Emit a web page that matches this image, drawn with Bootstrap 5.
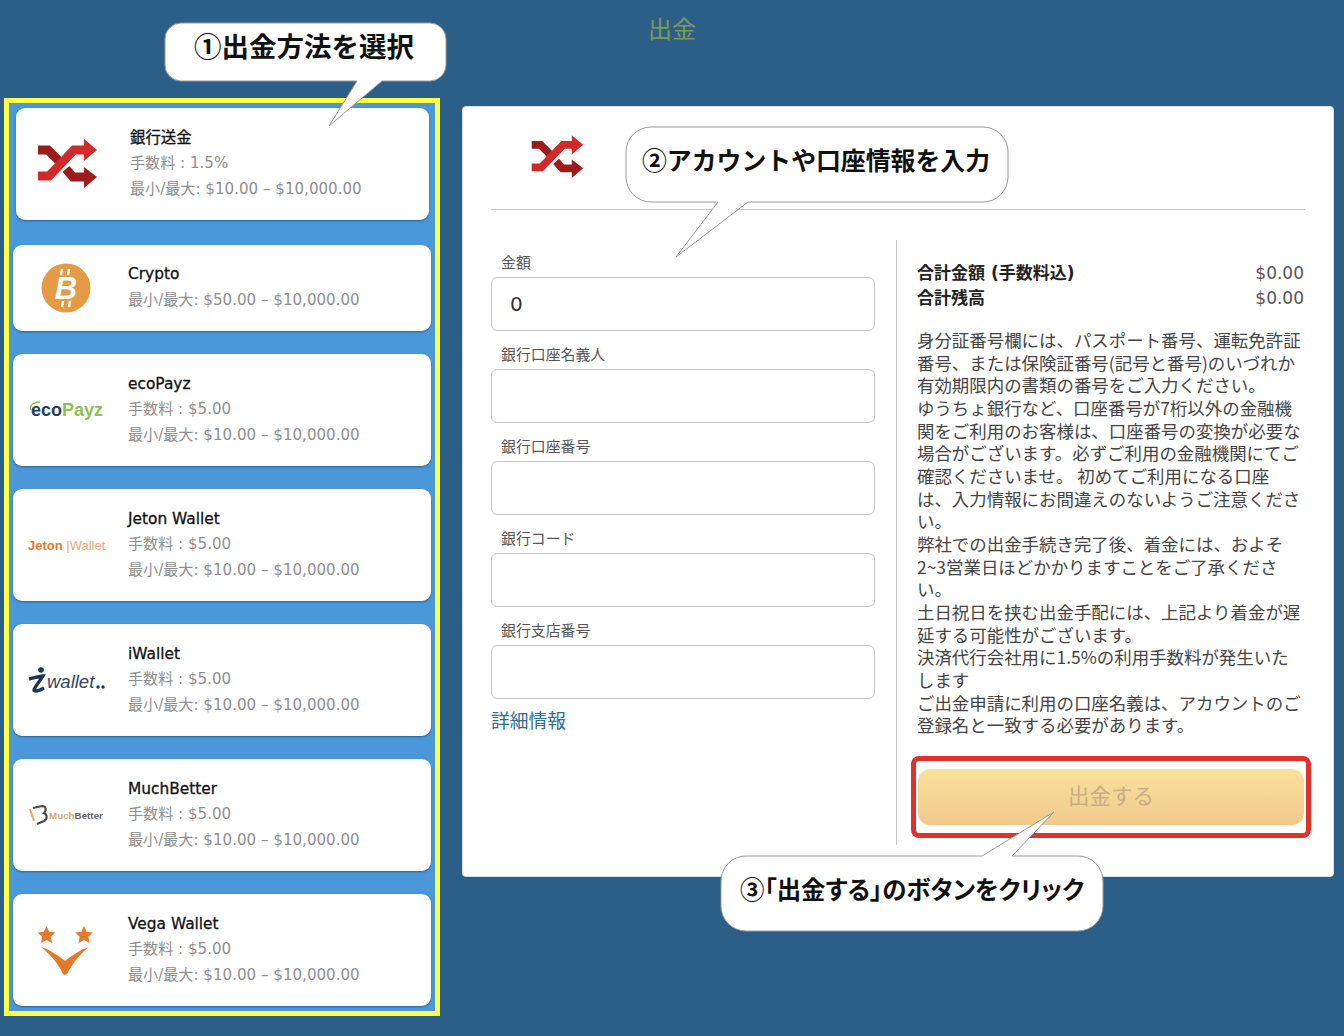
<!DOCTYPE html>
<html lang="ja">
  <head>
    <meta charset="UTF-8" />
    <meta name="viewport" content="width=device-width, initial-scale=1.0" />
    <title>出金</title>
    <link
      rel="stylesheet"
      href="https://cdn.jsdelivr.net/npm/bootstrap@5.3.0/dist/css/bootstrap.min.css"
    />
    <style>
      body {
        background: #2c5f88;
        font-family: "DejaVu Sans", "Noto Sans CJK JP", sans-serif;
        height: 1036px;
        overflow: hidden;
      }
      #page {
        width: 1344px;
        height: 1036px;
      }
      .page-title {
        height: 58px;
        line-height: 56px;
        font-size: 24px;
        font-weight: 400;
        color: #7c9a55;
        font-family: "Noto Sans CJK JP", sans-serif;
        margin: 0;
      }
      /* left column */
      .method-panel {
        width: 436px;
        height: 918px;
        margin: 40px 0 0 4px;
        border: 5px solid #fdfd4a;
        background: #4a98d9;
        padding: 0 4px;
      }
      .method {
        border: 0;
        border-radius: 9px;
        margin-bottom: 23px;
        height: 112px;
        box-shadow: 0 1px 2px rgba(20, 60, 100, 0.6);
      }
      .method.first {
        margin: 5px 2px 25px 3px;
      }
      .method.first .method-logo {
        width: 114px;
      }
      .method.first .method-logo svg {
        margin-left: 20px;
      }
      .method.short {
        height: 86px;
      }
      .method-logo {
        width: 115px;
        flex: none;
      }
      .method-name {
        font-size: 15.4px;
        line-height: 25.6px;
        color: #111;
        -webkit-text-stroke: 0.3px #111;
      }
      .method-info {
        font-size: 15.1px;
        line-height: 25.6px;
        color: #8e8e8e;
      }
      /* right panel */
      .detail-panel {
        width: 872px;
        height: 771px;
        margin: 48px 0 0 22px;
        border: 1px solid #d8dde2;
        border-radius: 4px;
        padding: 0 28px;
      }
      .detail-head {
        height: 103px;
        border-bottom: 1px solid #c9c9c9;
        padding: 27px 0 0 39px;
      }
      .form-col {
        width: 384px;
        padding-top: 42px;
      }
      .form-col .form-label {
        font-size: 14.9px;
        line-height: 22px;
        color: #555;
        margin: 0 0 3px 10px;
        display: block;
      }
      .form-col .form-control {
        height: 54px;
        border: 1px solid #c8c8c8;
        border-radius: 6px;
        font-size: 20px;
        color: #333;
        padding-left: 18px;
        margin-bottom: 13px;
      }
      .more-link {
        font-size: 18.75px;
        color: #2d6d92;
        text-decoration: none;
        font-family: "Noto Sans CJK JP", sans-serif;
        line-height: 24px;
        display: block;
        margin-top: -4px;
      }
      .summary-col {
        width: 408px;
        margin: 30px 0 0 21px;
        height: 605px;
        border-left: 1px solid #c4c4c4;
        padding: 21px 0 0 20px;
      }
      .total-row {
        font-size: 17px;
        line-height: 25px;
        color: #222;
      }
      .total-row .value {
        color: #555;
      }
      .notice {
        font-family: "Noto Sans CJK JP", sans-serif;
        font-size: 17.45px;
        line-height: 22.65px;
        color: #444;
        white-space: nowrap;
        margin: 18px 0 0;
      }
      .withdraw-box {
        width: 400px;
        height: 82px;
        margin: 19px 0 0 -6px;
        border: 5px solid #e0322a;
        border-radius: 8px;
        padding: 8px 2px 0;
      }
      .btn-withdraw {
        width: 100%;
        height: 56px;
        border: 0;
        border-radius: 12px;
        background: linear-gradient(#f9e29c, #f1c98d);
        color: #c8ae84;
        font-size: 21.5px;
        padding: 0 0 4px;
        font-family: "Noto Sans CJK JP", sans-serif;
      }
      /* callouts lie over everything */
      #callouts {
        position: absolute;
        left: 0;
        top: 0;
        pointer-events: none;
      }
      #callouts path {
        fill: #fff;
        stroke: #9a9a9a;
        stroke-width: 1;
      }
      #callouts text {
        font-family: "Noto Sans CJK JP", sans-serif;
        font-weight: 700;
        fill: #111;
      }
      #callouts .tight {
        font-feature-settings: "palt";
      }
      .logo-text {
        font-family: "Liberation Sans", sans-serif;
      }
    </style>
  </head>
  <body>
    <div id="page" class="position-relative">
      <h1 class="page-title text-center">出金</h1>
      <div class="d-flex align-items-start">
        <!-- Withdrawal methods -->
        <div class="method-panel">
          <div class="card method first flex-row align-items-center">
            <div class="method-logo">
              <svg width="62" height="52" viewBox="0 0 62 52" class="d-block">
                <use href="#shuffle" />
              </svg>
            </div>
            <div>
              <div class="method-name">銀行送金</div>
              <div class="method-info">手数料 : 1.5%</div>
              <div class="method-info">最小/最大: $10.00 – $10,000.00</div>
            </div>
          </div>

          <div class="card method short flex-row align-items-center">
            <div class="method-logo">
              <svg width="115" height="52" viewBox="0 0 115 52" class="d-block">
                <circle cx="53" cy="26" r="24.5" fill="#e59a45" />
                <text x="53" y="37" text-anchor="middle" font-size="31" font-weight="700" font-style="italic" fill="#fff" class="logo-text">B</text>
                <path d="M49 7l-1 6M56 7l-1 6M50 39l-1 6M57 39l-1 6" stroke="#fff" stroke-width="2.4" />
              </svg>
            </div>
            <div>
              <div class="method-name">Crypto</div>
              <div class="method-info">最小/最大: $50.00 – $10,000.00</div>
            </div>
          </div>

          <div class="card method flex-row align-items-center">
            <div class="method-logo">
              <svg width="115" height="40" viewBox="0 0 115 40" class="d-block">
                <path d="M18 20c-2-4 2-8 9-8" fill="none" stroke="#8bbd4f" stroke-width="1.3" />
                <text x="18" y="26" font-size="18" font-weight="700" class="logo-text"><tspan fill="#1d3f5c">eco</tspan><tspan fill="#8bc154">Payz</tspan></text>
              </svg>
            </div>
            <div>
              <div class="method-name">ecoPayz</div>
              <div class="method-info">手数料 : $5.00</div>
              <div class="method-info">最小/最大: $10.00 – $10,000.00</div>
            </div>
          </div>

          <div class="card method flex-row align-items-center">
            <div class="method-logo">
              <svg width="115" height="40" viewBox="0 0 115 40" class="d-block">
                <text x="15" y="25" font-size="13" class="logo-text"><tspan fill="#e17a32" font-weight="700">Jeton</tspan><tspan fill="#eba678"> |Wallet</tspan></text>
              </svg>
            </div>
            <div>
              <div class="method-name">Jeton Wallet</div>
              <div class="method-info">手数料 : $5.00</div>
              <div class="method-info">最小/最大: $10.00 – $10,000.00</div>
            </div>
          </div>

          <div class="card method flex-row align-items-center">
            <div class="method-logo">
              <svg width="115" height="40" viewBox="0 0 115 40" class="d-block">
                <circle cx="28" cy="10" r="2.8" fill="#1c3553" />
                <path d="M16 19c5-1 10-3 14-3-3 5-8 10-9 14 0 2 5 1 10-2" fill="none" stroke="#1c3553" stroke-width="3.4" />
                <text x="34" y="28" font-size="18.5" font-style="italic" fill="#30465e" class="logo-text">wallet</text>
                <circle cx="85" cy="27" r="1.7" fill="#1c3553" />
                <circle cx="90" cy="27" r="1.7" fill="#1c3553" />
              </svg>
            </div>
            <div>
              <div class="method-name">iWallet</div>
              <div class="method-info">手数料 : $5.00</div>
              <div class="method-info">最小/最大: $10.00 – $10,000.00</div>
            </div>
          </div>

          <div class="card method flex-row align-items-center">
            <div class="method-logo">
              <svg width="115" height="40" viewBox="0 0 115 40" class="d-block">
                <path d="M20 13l9-2c4 0 5 4 2 7 3 1 4 6 0 8l-7 3" fill="none" stroke="#4a4a4a" stroke-width="2.2" />
                <path d="M17 14l4 12" fill="none" stroke="#e5a85c" stroke-width="2" />
                <text x="36" y="24" font-size="9.8" font-weight="700" class="logo-text"><tspan fill="#e5a85c">Much</tspan><tspan fill="#666">Better</tspan></text>
              </svg>
            </div>
            <div>
              <div class="method-name">MuchBetter</div>
              <div class="method-info">手数料 : $5.00</div>
              <div class="method-info">最小/最大: $10.00 – $10,000.00</div>
            </div>
          </div>

          <div class="card method flex-row align-items-center mb-0">
            <div class="method-logo">
              <svg width="115" height="60" viewBox="0 0 115 60" class="d-block">
                <path id="star" d="M33.500 6l2.700 5.700 6.200.8-4.600 4.300 1.200 6.200-5.500-3-5.500 3 1.200-6.200-4.600-4.300 6.200-.8z" fill="#e5792b" />
                <use href="#star" x="37.500" />
                <path d="M28 27c9 3 17 8 24 14 7-6 15-11 24-14-8 6-15 14-22 27-1 1-3 1-4 0-5-11-13-20-22-27z" fill="#e5792b" />
              </svg>
            </div>
            <div>
              <div class="method-name">Vega Wallet</div>
              <div class="method-info">手数料 : $5.00</div>
              <div class="method-info">最小/最大: $10.00 – $10,000.00</div>
            </div>
          </div>
        </div>

        <!-- Withdrawal form -->
        <div class="card detail-panel">
          <div class="detail-head">
            <svg width="54" height="46" viewBox="0 0 62 52" class="d-block">
              <use href="#shuffle" />
            </svg>
          </div>
          <div class="d-flex">
            <form class="form-col">
              <label class="form-label" for="amount">金額</label>
              <input id="amount" class="form-control" type="text" value="0" />
              <label class="form-label" for="holder">銀行口座名義人</label>
              <input id="holder" class="form-control" type="text" />
              <label class="form-label" for="account">銀行口座番号</label>
              <input id="account" class="form-control" type="text" />
              <label class="form-label" for="code">銀行コード</label>
              <input id="code" class="form-control" type="text" />
              <label class="form-label" for="branch">銀行支店番号</label>
              <input id="branch" class="form-control" type="text" />
              <a class="more-link" href="#">詳細情報</a>
            </form>
            <div class="summary-col">
              <div class="total-row d-flex justify-content-between">
                <span class="fw-bold">合計金額 (手数料込)</span><span class="value">$0.00</span>
              </div>
              <div class="total-row d-flex justify-content-between">
                <span class="fw-bold">合計残高</span><span class="value">$0.00</span>
              </div>
              <p class="notice">
                身分証番号欄には、パスポート番号、運転免許証<br />
                番号、または保険証番号(記号と番号)のいづれか<br />
                有効期限内の書類の番号をご入力ください。<br />
                ゆうちょ銀行など、口座番号が7桁以外の金融機<br />
                関をご利用のお客様は、口座番号の変換が必要な<br />
                場合がございます。必ずご利用の金融機関にてご<br />
                確認くださいませ。 初めてご利用になる口座<br />
                は、入力情報にお間違えのないようご注意くださ<br />
                い。<br />
                弊社での出金手続き完了後、着金には、およそ<br />
                2~3営業日ほどかかりますことをご了承くださ<br />
                い。<br />
                土日祝日を挟む出金手配には、上記より着金が遅<br />
                延する可能性がございます。<br />
                決済代行会社用に1.5%の利用手数料が発生いた<br />
                します<br />
                ご出金申請に利用の口座名義は、アカウントのご<br />
                登録名と一致する必要があります。
              </p>
              <div class="withdraw-box">
                <button class="btn btn-withdraw" type="button">出金する</button>
              </div>
            </div>
          </div>
        </div>
      </div>

      <!-- Tutorial callouts -->
      <svg id="callouts" width="1344" height="1036" viewBox="0 0 1344 1036">
        <path d="M181 23H430a16 16 0 0 1 16 16V65a16 16 0 0 1-16 16H382L329 126L357 81H181a16 16 0 0 1-16-16V39a16 16 0 0 1 16-16z" />
        <text x="194" y="57" font-size="27" textLength="220" lengthAdjust="spacingAndGlyphs">①出金方法を選択</text>
        <path d="M651 127H983a25 25 0 0 1 25 25V177a25 25 0 0 1-25 25H748L676 257L718 202H651a25 25 0 0 1-25-25V152a25 25 0 0 1 25-25z" />
        <text x="642" y="170" font-size="25" textLength="348" lengthAdjust="spacingAndGlyphs">②アカウントや口座情報を入力</text>
        <path d="M746 856H982L1054 812L1012 856H1078a25 25 0 0 1 25 25V906a25 25 0 0 1-25 25H746a25 25 0 0 1-25-25V881a25 25 0 0 1 25-25z" />
        <text x="740" y="899" font-size="25" class="tight" textLength="344" lengthAdjust="spacingAndGlyphs">③「出金する」のボタンをクリック</text>
      </svg>

      <svg width="0" height="0" class="position-absolute">
        <defs>
          <g id="shuffle">
            <path d="M2 12H12L26 26M30 31L37 39H50" fill="none" stroke="#9c1c1c" stroke-width="9" />
            <path d="M48 29L61 39L48 50z" fill="#9c1c1c" />
            <path d="M2 38H13L38 12H50" fill="none" stroke="#d22a2a" stroke-width="9" />
            <path d="M48 1L61 12L48 23z" fill="#d22a2a" />
          </g>
        </defs>
      </svg>
    </div>
  </body>
</html>
